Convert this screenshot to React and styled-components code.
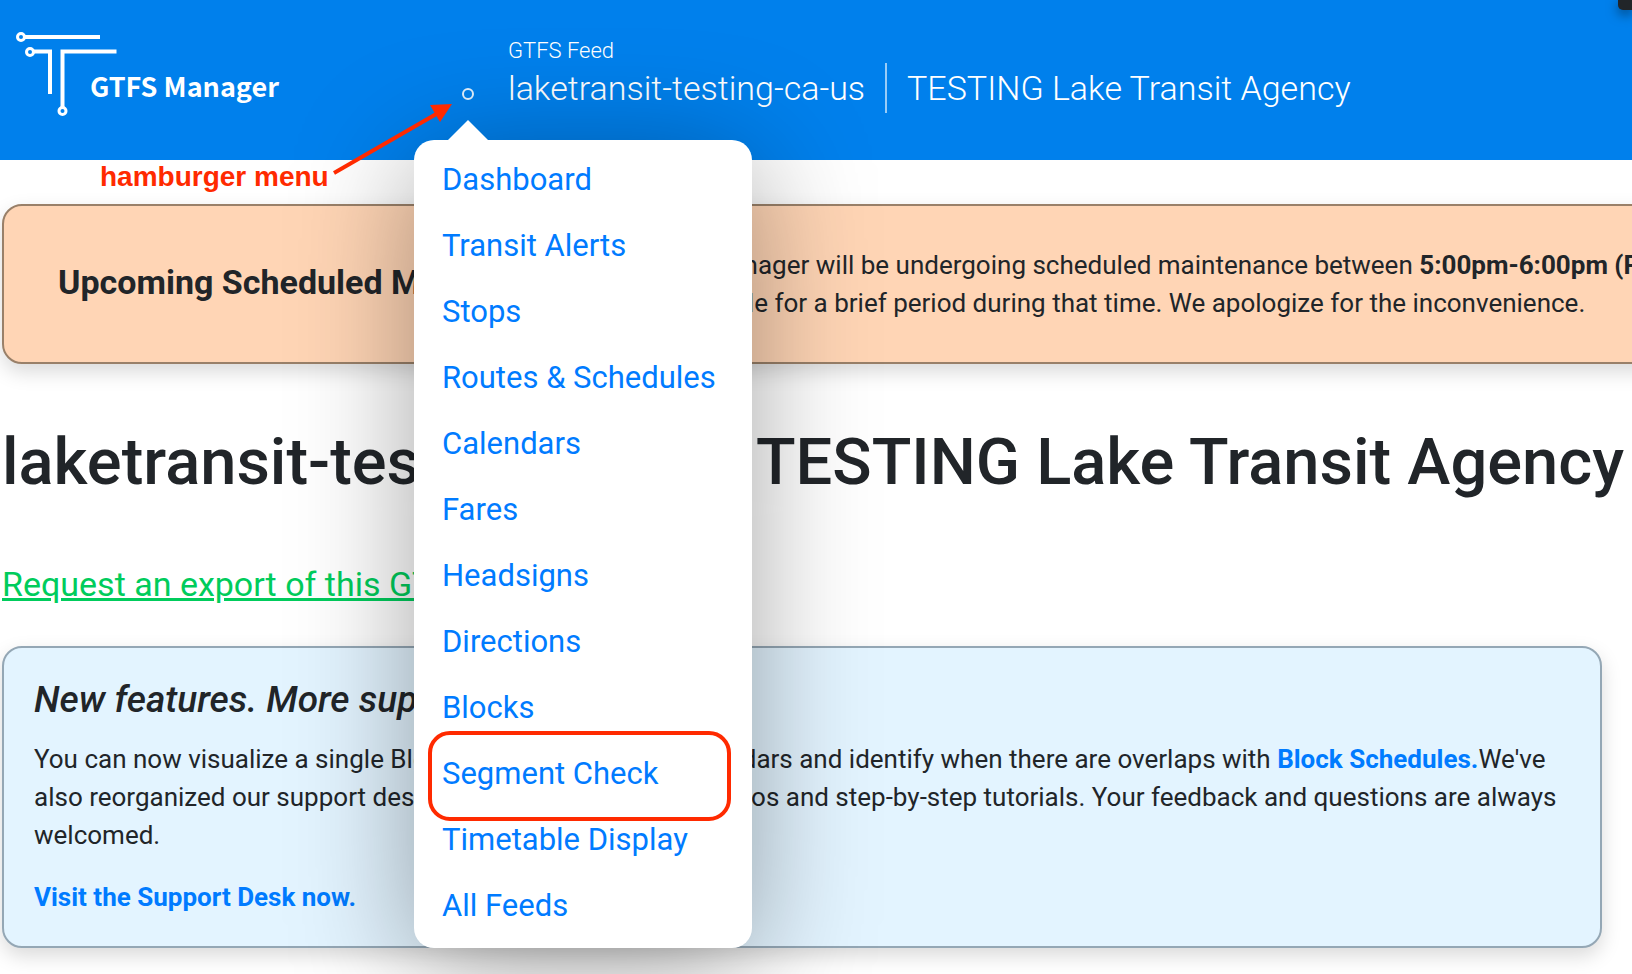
import { useState } from 'react';
import styled, { createGlobalStyle, css } from 'styled-components';

const GlobalStyle = createGlobalStyle`
    *, *::before, *::after {
        box-sizing: border-box;
    }
    body {
        margin: 0;
        overflow-x: hidden;
        background: #fff;
        color: #212529;
        font-family: Roboto, "Liberation Sans", sans-serif;
        font-size: 26px;
        line-height: 38px;
    }
    h1, h2, h3, p, ul {
        margin: 0;
        padding: 0;
    }
`;

const Page = styled.div`
    position: relative;
    overflow: hidden;
    padding-bottom: 26px;
`;

const Header = styled.header`
    display: flex;
    align-items: flex-start;
    height: 160px;
    padding: 32px 16px 0;
    background: #0080ec;
    color: #fff;
`;

const LogoLink = styled.a`
    flex: 0 0 432px;
    color: #fff;

    svg {
        display: block;
    }
`;

const LogoText = styled.text`
    font-family: "Noto Sans CJK SC", "Noto Sans", sans-serif;
    font-size: 27px;
    font-weight: 700;
`;

const MenuAnchor = styled.nav`
    position: relative;
    flex: 0 0 40px;
    margin-top: 42px;
`;

const MenuToggle = styled.button`
    display: flex;
    align-items: center;
    justify-content: center;
    width: 40px;
    height: 40px;
    padding: 0;
    border: 0;
    background: none;
    cursor: pointer;

    &::before {
        content: '';
        width: 12px;
        height: 12px;
        border: 2px solid #e3f1fd;
        border-radius: 50%;
    }
`;

const Menu = styled.ul`
    position: absolute;
    z-index: 10;
    top: 66px;
    left: -34px;
    width: 338px;
    padding: 7px 0 9px;
    border-radius: 20px;
    background: #fff;
    box-shadow: 0 20px 120px rgba(0, 0, 0, 0.36);
    list-style: none;

    &::before {
        content: '';
        position: absolute;
        top: -20px;
        left: 34px;
        border: 20px solid transparent;
        border-top: 0;
        border-bottom-color: #fff;
    }
`;

const MenuItem = styled.li`
    position: relative;

    ${({$marked}) => $marked && css`
        &::after {
            content: '';
            position: absolute;
            inset: -10px 21px -14px 14px;
            border: 4px solid #ff2a00;
            border-radius: 22px;
            pointer-events: none;
        }
    `}
`;

const MenuLink = styled.a`
    display: block;
    padding: 14px 28px;
    color: #007bff;
    font-size: 31px;
    text-decoration: none;
`;

const Feed = styled.div`
    margin: 7px 0 0 20px;
`;

const FeedLabel = styled.div`
    font-size: 22px;
    font-weight: 300;
    line-height: 24px;
`;

const FeedTitle = styled.div`
    display: flex;
    align-items: center;
    font-size: 34px;
    font-weight: 300;
    line-height: 42px;
    white-space: nowrap;

    span + span {
        margin-left: 20px;
        padding: 4px 0 4px 20px;
        border-left: 2px solid rgba(255, 255, 255, 0.6);
    }
`;

const CornerTab = styled.div`
    position: absolute;
    top: 0;
    right: 0;
    width: 14px;
    height: 10px;
    border-bottom-left-radius: 5px;
    background: #212529;
    box-shadow: 0 4px 12px rgba(0, 0, 0, 0.5);
`;

const Main = styled.main`
    padding: 44px 30px 0 2px;
`;

const Panel = styled.section`
    border: 2px solid ${({$border}) => $border};
    border-radius: 20px;
    background: ${({$fill}) => $fill};
    box-shadow: 0 8px 20px rgba(0, 0, 0, 0.15);
`;

// runs past the right edge of the window
const Banner = styled(Panel)`
    display: flex;
    align-items: center;
    gap: 48px;
    width: max-content;
    min-width: 100%;
    height: 160px;
    padding: 0 54px;
    white-space: nowrap;
`;

const BannerTitle = styled.h2`
    padding-bottom: 4px;
    font-size: 34px;
    font-weight: 700;
`;

const Title = styled.h1`
    display: flex;
    justify-content: space-between;
    margin-top: 58px;
    margin-right: -22px;
    font-size: 65px;
    font-weight: 500;
    line-height: 80px;
    white-space: nowrap;
`;

const ExportLink = styled.a`
    display: inline-block;
    margin: 62px 0 42px;
    color: #00cc5c;
    font-size: 34px;
    line-height: 40px;
    text-underline-offset: 2px;
`;

const News = styled(Panel)`
    padding: 30px;
`;

const NewsTitle = styled.h3`
    margin-bottom: 18px;
    font-size: 37px;
    font-style: italic;
    font-weight: 500;
    line-height: 44px;
`;

const NewsLink = styled.a`
    color: #007bff;
    font-weight: 700;
    text-decoration: none;
`;

const Visit = styled.p`
    margin-top: 24px;
`;

const Note = styled.div`
    position: absolute;
    z-index: 11;
    top: 158px;
    left: 100px;
    color: #ff2a00;
    font-family: "Liberation Sans", Arial, sans-serif;
    font-size: 28px;
    font-weight: 700;
`;

const Arrow = styled.svg`
    position: absolute;
    z-index: 11;
    top: 100px;
    left: 330px;
    pointer-events: none;
`;

const kMenu = [
    'Dashboard',
    'Transit Alerts',
    'Stops',
    'Routes & Schedules',
    'Calendars',
    'Fares',
    'Headsigns',
    'Directions',
    'Blocks',
    'Segment Check',
    'Timetable Display',
    'All Feeds',
];

function Logo() {
    return (
        <LogoLink href="#">
            <svg width="264" height="92" viewBox="0 0 264 92">
                <g fill="none" stroke="currentColor" strokeWidth="4">
                    <circle cx="5" cy="5" r="3.5" strokeWidth="3" />
                    <path d="M9 5H84" />
                    <circle cx="14" cy="20" r="3.5" strokeWidth="3" />
                    <path d="M18 19.5H34V62" />
                    <path d="M100.5 19.5H46.5V75" />
                    <circle cx="46.5" cy="79" r="3.5" strokeWidth="3" />
                </g>
                <LogoText x="74" y="65" fill="currentColor">GTFS Manager</LogoText>
            </svg>
        </LogoLink>
    );
}

function FeedMenu() {
    const [open, setOpen] = useState(true);
    return (
        <MenuAnchor>
            <MenuToggle aria-label="Menu" aria-expanded={open} onClick={() => setOpen(!open)} />
            {open &&
                <Menu>
                    {kMenu.map(name => (
                        <MenuItem key={name} $marked={name === 'Segment Check'}>
                            <MenuLink href="#">{name}</MenuLink>
                        </MenuItem>
                    ))}
                </Menu>
            }
        </MenuAnchor>
    );
}

function App() {
    return (
        <Page>
            <GlobalStyle />
            <Header>
                <Logo />
                <FeedMenu />
                <Feed>
                    <FeedLabel>GTFS Feed</FeedLabel>
                    <FeedTitle>
                        <span>laketransit-testing-ca-us</span>
                        <span>TESTING Lake Transit Agency</span>
                    </FeedTitle>
                </Feed>
            </Header>
            <CornerTab />

            <Main>
                <Banner $fill="#ffd5b5" $border="#998069">
                    <BannerTitle>Upcoming Scheduled Maintenance</BannerTitle>
                    <p>
                        GTFS Manager will be undergoing scheduled maintenance between <b>5:00pm-6:00pm (PST)</b> and may be
                        <br />
                        unavailable for a brief period during that time. We apologize for the inconvenience.
                    </p>
                </Banner>

                <Title>
                    <span>laketransit-testing-ca-us</span>
                    <span>TESTING Lake Transit Agency</span>
                </Title>

                <ExportLink href="#">Request an export of this GTFS feed</ExportLink>

                <News $fill="#e3f4ff" $border="#94a7b5">
                    <NewsTitle>New features. More support.</NewsTitle>
                    <p>
                        You can now visualize a single Block across its multiple calendars and identify when there are overlaps with <NewsLink href="#">Block Schedules.</NewsLink>We've
                        also reorganized our support desk to include instructional videos and step-by-step tutorials. Your feedback and questions are always welcomed.
                    </p>
                    <Visit>
                        <NewsLink href="#">Visit the Support Desk now.</NewsLink>
                    </Visit>
                </News>
            </Main>

            <Note>hamburger menu</Note>
            <Arrow width="130" height="80" viewBox="0 0 130 80" fill="#ff2a00">
                <path d="M4 73L108 13" stroke="#ff2a00" strokeWidth="4" />
                <path d="M122 4L100 5L110 22Z" />
            </Arrow>
        </Page>
    );
}

export default App;
